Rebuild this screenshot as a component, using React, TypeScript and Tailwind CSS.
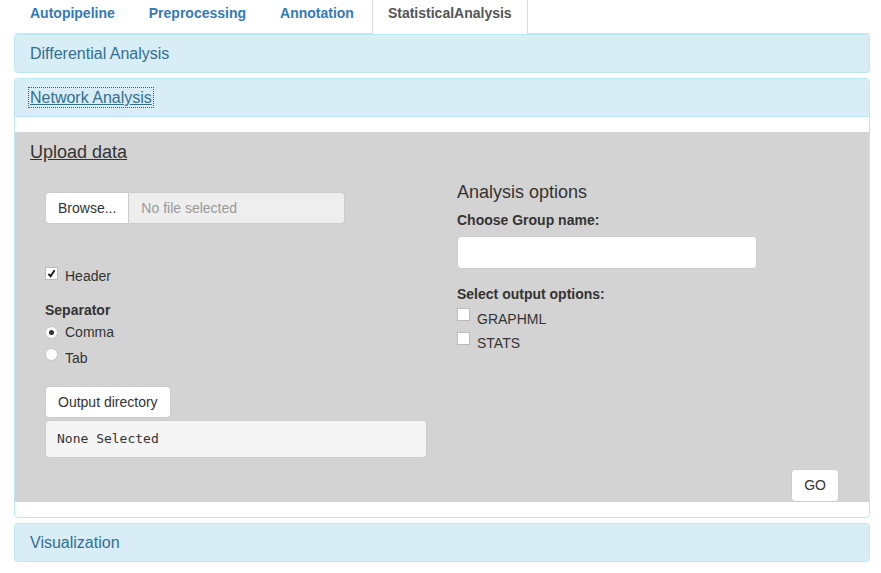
import React from "react";

const sans = { fontFamily: '"Liberation Sans", Arial, sans-serif' };

function Checkbox({ checked }: { checked?: boolean }) {
  return (
    <span className="inline-flex h-[13px] w-[13px] items-center justify-center border border-[#bbb] bg-white">
      {checked ? (
        <svg width="9" height="9" viewBox="0 0 9 9">
          <path d="M1.5 4.8 L3.6 7.3 L7.6 1.2" fill="none" stroke="#111" strokeWidth="1.8" />
        </svg>
      ) : null}
    </span>
  );
}

function Radio({ checked }: { checked?: boolean }) {
  return (
    <span className="inline-flex h-[13px] w-[13px] items-center justify-center rounded-full border border-[#c4c4c4] bg-white">
      {checked ? <span className="h-[5px] w-[5px] rounded-full bg-[#333]" /> : null}
    </span>
  );
}

export default function App() {
  const tabs = ["Autopipeline", "Preprocessing", "Annotation", "StatisticalAnalysis"];
  return (
    <div className="h-[573px] w-[881px] overflow-hidden bg-white text-[14px] text-[#333]" style={sans}>
      {/* tabs */}
      <div className="ml-[14px] flex h-[34px] w-[856px] border-b border-[#ddd]">
        {tabs.map((t, i) => {
          const active = i === 3;
          return (
            <div
              key={t}
              className={
                "mr-[2px] -mb-px h-[34px] px-[15px] pt-[3px] text-[14px] font-bold leading-[20px] " +
                (active
                  ? "border-x border-[#ddd] bg-white text-[#555]"
                  : "border-x border-transparent text-[#337ab7]")
              }
            >
              {t}
            </div>
          );
        })}
      </div>

      <div className="ml-[14px] w-[856px]">
        {/* Differential */}
        <div className="rounded-[4px] border border-[#bce8f1] bg-[#d9edf7] px-[15px] py-[10px] text-[16px] leading-[17px] text-[#31708f]">
          Differential Analysis
        </div>

        {/* Network */}
        <div className="mt-[5px] overflow-hidden rounded-[4px] border border-[#bce8f1] bg-white">
          <div className="border-b border-[#bce8f1] bg-[#d9edf7] px-[15px] py-[10px] text-[16px] leading-[17px] text-[#31708f]">
            <span className="underline outline-1 outline-dotted outline-[#555] outline-offset-[1px]">Network Analysis</span>
          </div>
          <div className="pb-[15px] pt-[15px]">
            <div className="bg-[#d3d3d3] px-[15px] pt-[10px]">
              <div className="text-[18px] leading-[20px] underline">Upload data</div>
              <div className="mt-[19px] grid grid-cols-2">
                {/* left col */}
                <div className="px-[15px]">
                  <div className="mt-[11px] flex h-[32px] w-[300px]">
                    <div className="flex items-center rounded-l-[4px] border border-[#ccc] bg-white px-[12px] text-[14px]">Browse...</div>
                    <div className="flex flex-1 items-center rounded-r-[4px] border border-l-0 border-[#ccc] bg-[#eee] px-[12px] text-[14px] text-[#999]">No file selected</div>
                  </div>
                  <div className="mt-[42px] flex h-[20px] items-center">
                    <span className="-mt-[5px]"><Checkbox checked /></span>
                    <span className="ml-[7px]">Header</span>
                  </div>
                  <div className="mt-[14px] h-[20px] font-bold leading-[20px]">Separator</div>
                  <div className="mt-[2px] flex h-[20px] items-center">
                    <span className="-mt-[3px]"><Radio checked /></span>
                    <span className="ml-[7px]">Comma</span>
                  </div>
                  <div className="mt-[6px] flex h-[20px] items-center">
                    <span className="-mt-[3px]"><Radio /></span>
                    <span className="ml-[7px]">Tab</span>
                  </div>
                  <div className="mt-[18px] inline-flex h-[32px] items-center rounded-[4px] border border-[#ccc] bg-white px-[12px]">Output directory</div>
                  <div
                    className="mt-[2px] flex h-[38px] items-center rounded-[4px] border border-[#ccc] bg-[#f5f5f5] px-[11px] text-[13px] text-[#333]"
                    style={{ fontFamily: '"DejaVu Sans Mono", monospace' }}
                  >
                    None Selected
                  </div>
                </div>
                {/* right col */}
                <div className="px-[15px]">
                  <div className="mt-[1px] text-[18px] leading-[20px]">Analysis options</div>
                  <div className="mt-[8px] h-[20px] font-bold leading-[20px]">Choose Group name:</div>
                  <div className="mt-[6px] h-[33px] w-[300px] rounded-[4px] border border-[#ccc] bg-white" />
                  <div className="mt-[15px] h-[20px] font-bold leading-[20px]">Select output options:</div>
                  <div className="mt-[5px] flex h-[20px] items-center">
                    <span className="-mt-[5px]"><Checkbox /></span>
                    <span className="ml-[7px]">GRAPHML</span>
                  </div>
                  <div className="mt-[4px] flex h-[20px] items-center">
                    <span className="-mt-[5px]"><Checkbox /></span>
                    <span className="ml-[7px]">STATS</span>
                  </div>
                </div>
              </div>
              <div className="mt-[11px] flex justify-end px-[15px]">
                <div className="flex h-[33px] items-center rounded-[4px] border border-[#ccc] bg-white px-[12px]">GO</div>
              </div>
            </div>
          </div>
        </div>

        {/* Visualization */}
        <div className="mt-[5px] rounded-[4px] border border-[#bce8f1] bg-[#d9edf7] px-[15px] py-[10px] text-[16px] leading-[17px] text-[#31708f]">
          Visualization
        </div>
      </div>
    </div>
  );
}
